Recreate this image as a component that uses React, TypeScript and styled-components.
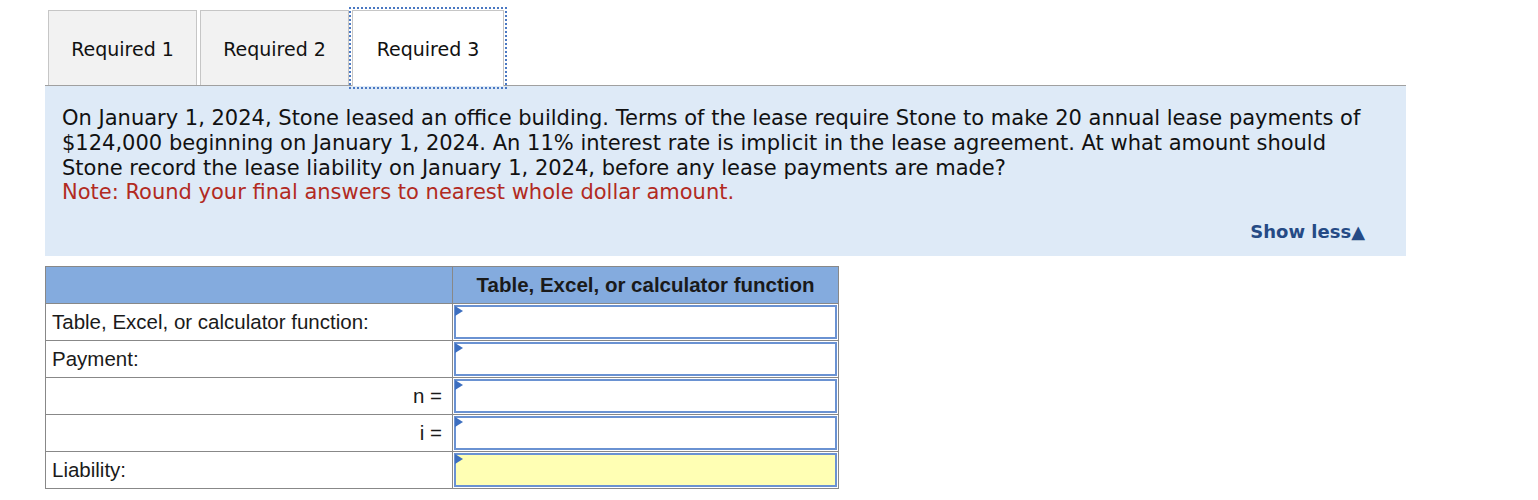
import styled, { createGlobalStyle } from "styled-components";

const GlobalStyle = createGlobalStyle`
  body {
    margin: 0;
    background: #ffffff;
    font-family: "DejaVu Sans", Verdana, sans-serif;
  }
`;

const Page = styled.div`
  padding: 10px 0 0 45px;
  width: 1361px;
`;

const TabRow = styled.div`
  display: flex;
  gap: 3px;
  padding-left: 3px;
  border-bottom: 1px solid #a0a0a0;
`;

const Tab = styled.div<{ $active?: boolean }>`
  width: 149px;
  height: 75px;
  display: flex;
  align-items: center;
  justify-content: center;
  padding-top: 1px;
  box-sizing: border-box;
  font-size: 19px;
  color: #111;
  background: ${(p) => (p.$active ? "#ffffff" : "#f2f2f2")};
  border: 1px solid #c6c6c6;
  border-bottom: none;
  ${(p) =>
    p.$active &&
    `
    width: 152px;
    outline: 2px dotted #4a78c2;
    outline-offset: 1px;
    margin-bottom: -1px;
    height: 76px;
  `}
`;

const Prompt = styled.div`
  background: #deeaf7;
  padding: 20px 41px 14px 17px;
`;

const Question = styled.p`
  margin: 0;
  font-size: 21px;
  line-height: 24.8px;
  color: #111;
`;

const Note = styled.span`
  display: block;
  color: #b22a22;
`;

const ShowLess = styled.div`
  margin-top: 16px;
  text-align: right;
  font-size: 18px;
  font-weight: bold;
  color: #254a85;
`;

const Table = styled.table`
  margin-top: 10px;
  border-collapse: collapse;
  table-layout: fixed;
  width: 793px;
  font-family: "Liberation Sans", Arial, sans-serif;
  font-size: 20.5px;
  color: #1a1a1a;
  border: 1px solid #888;
`;

const Col = styled.col<{ $w: number }>`
  width: ${(p) => p.$w}px;
`;

const HeaderCell = styled.th`
  height: 36px;
  padding: 0;
  background: #84abde;
  border: 1px solid #888;
  font-weight: bold;
  font-size: 20.5px;
  text-align: center;
`;

const LabelCell = styled.td<{ $right?: boolean }>`
  height: 36px;
  padding: 0 ${(p) => (p.$right ? "10px" : "0")} 0 6px;
  border: 1px solid #888;
  text-align: ${(p) => (p.$right ? "right" : "left")};
  vertical-align: middle;
  white-space: nowrap;
`;

const InputCell = styled.td`
  padding: 1px;
  border: 1px solid #888;
`;

const AnswerBox = styled.div<{ $highlight?: boolean }>`
  position: relative;
  height: 30px;
  border: 2px solid #6a92d2;
  background: ${(p) => (p.$highlight ? "#ffffb4" : "#ffffff")};

  &::before {
    content: "";
    position: absolute;
    left: -1px;
    top: -1px;
    border-left: 8px solid #3d6fc0;
    border-top: 5px solid transparent;
    border-bottom: 5px solid transparent;
  }
`;

const rows = [
  { label: "Table, Excel, or calculator function:" },
  { label: "Payment:" },
  { label: "n =", right: true },
  { label: "i =", right: true },
  { label: "Liability:", highlight: true },
];

export default function App() {
  return (
    <Page>
      <GlobalStyle />
      <TabRow>
        <Tab>Required 1</Tab>
        <Tab>Required 2</Tab>
        <Tab $active>Required 3</Tab>
      </TabRow>
      <Prompt>
        <Question>
          On January 1, 2024, Stone leased an office building. Terms of the
          lease require Stone to make 20 annual lease payments of $124,000
          beginning on January 1, 2024. An 11% interest rate is implicit in the
          lease agreement. At what amount should Stone record the lease
          liability on January 1, 2024, before any lease payments are made?
          <Note>Note: Round your final answers to nearest whole dollar amount.</Note>
        </Question>
        <ShowLess>Show less▲</ShowLess>
      </Prompt>
      <Table>
        <colgroup>
          <Col $w={407} />
          <Col $w={386} />
        </colgroup>
        <thead>
          <tr>
            <HeaderCell />
            <HeaderCell>Table, Excel, or calculator function</HeaderCell>
          </tr>
        </thead>
        <tbody>
          {rows.map((r) => (
            <tr key={r.label}>
              <LabelCell $right={r.right}>{r.label}</LabelCell>
              <InputCell>
                <AnswerBox $highlight={r.highlight} />
              </InputCell>
            </tr>
          ))}
        </tbody>
      </Table>
    </Page>
  );
}
